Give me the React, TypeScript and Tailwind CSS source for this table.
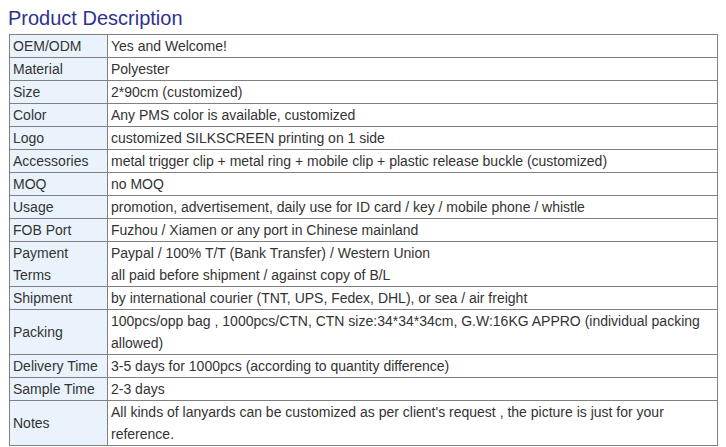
const rows: [string, string[]][] = [
  ['OEM/ODM', ['Yes and Welcome!']],
  ['Material', ['Polyester']],
  ['Size', ['2*90cm (customized)']],
  ['Color', ['Any PMS color is available, customized']],
  ['Logo', ['customized SILKSCREEN printing on 1 side']],
  ['Accessories', ['metal trigger clip + metal ring + mobile clip + plastic release buckle (customized)']],
  ['MOQ', ['no MOQ']],
  ['Usage', ['promotion, advertisement, daily use for ID card / key / mobile phone / whistle']],
  ['FOB Port', ['Fuzhou / Xiamen or any port in Chinese mainland']],
  ['Payment Terms', ['Paypal / 100% T/T (Bank Transfer) / Western Union', 'all paid before shipment / against copy of B/L']],
  ['Shipment', ['by international courier (TNT, UPS, Fedex, DHL), or sea / air freight']],
  ['Packing', ['100pcs/opp bag , 1000pcs/CTN, CTN size:34*34*34cm, G.W:16KG APPRO (individual packing allowed)']],
  ['Delivery Time', ['3-5 days for 1000pcs (according to quantity difference)']],
  ['Sample Time', ['2-3 days']],
  ['Notes', ["All kinds of lanyards can be customized as per client's request , the picture is just for your reference."]],
];

export default function App() {
  return (
    <div className="w-[726px] h-[447px] bg-white font-['Liberation_Sans',Arial,sans-serif] overflow-hidden">
      <h1 className="pl-[8px] pt-[6px] text-[20px] leading-[24px] text-[#2e3192] font-normal">
        Product Description
      </h1>
      <table className="mt-[4px] ml-[9px] w-[709px] border-collapse text-[14px] leading-[22px] text-[#333]">
        <tbody>
          {rows.map(([label, lines]) => (
            <tr key={label}>
              <td className="w-[98px] border border-[#808080] bg-[#eaf3fc] px-[3px] py-0 align-middle">
                {label}
              </td>
              <td className="border border-[#808080] px-[3px] py-0 align-middle">
                {lines.map((l) => (
                  <div key={l}>{l}</div>
                ))}
              </td>
            </tr>
          ))}
        </tbody>
      </table>
    </div>
  );
}
